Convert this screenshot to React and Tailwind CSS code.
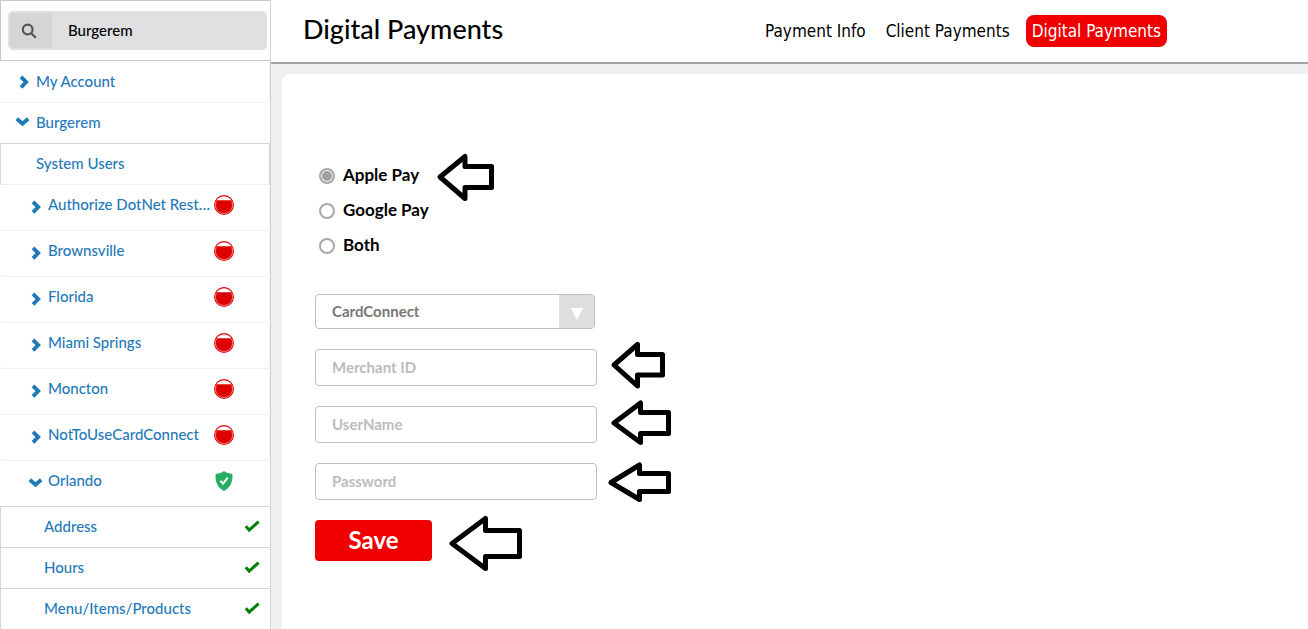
import React, { useState } from 'react';

//sidebar top links
const locations = [
  { name: 'Authorize DotNet Rest…', status: 'stop' },
  { name: 'Brownsville', status: 'stop' },
  { name: 'Florida', status: 'stop' },
  { name: 'Miami Springs', status: 'stop' },
  { name: 'Moncton', status: 'stop' },
  { name: 'NotToUseCardConnect', status: 'stop' },
  { name: 'Orlando', status: 'active', open: true },
];

const orlandoPages = ['Address', 'Hours', 'Menu/Items/Products'];

//credential fields with their pointer arrow
const fields = [
  { id: 'merchant', label: 'Merchant ID', type: 'text', arrow: '5,25 28.5,4.5 28.5,14.5 53.5,14.5 53.5,35 28.5,35 28.5,46' },
  { id: 'username', label: 'UserName', type: 'text', arrow: '5,26 31.5,6 31.5,15.5 59.5,15.5 59.5,36.5 31.5,36.5 31.5,45.5' },
  { id: 'password', label: 'Password', type: 'password', arrow: '2,28.5 30.5,11 30.5,19.5 59.5,19.5 59.5,37.5 30.5,37.5 30.5,45.5' },
];

const payOptions = ['Apple Pay', 'Google Pay', 'Both'];

function Chevron({ open }) {
  return (
    <svg className="w-4 h-4 shrink-0" viewBox="0 0 16 16" fill="none" stroke="#1f7ab8" strokeWidth="3.8">
      {open ? <path d="M1.8 4.8 7.5 9.7l5.700-4.900" /> : <path d="M5 2.900l5.200 5.200-5.200 5.200" />}
    </svg>
  );
}

function StopIcon() {
  return (
    <svg className="w-5 h-5 shrink-0" viewBox="0 0 20 20">
      <circle cx="10" cy="10" r="9.4" fill="#fff" stroke="#dd0000" strokeWidth="1.1" />
      <path d="M2.600 5.200h14.800a8.900 8.900 0 1 1-14.800 0z" fill="#dd0000" />
      <path d="M2.300 6.400a8.500 8.500 0 1 0 15.400 0" fill="none" stroke="#f5a0a0" strokeWidth="0.7" />
    </svg>
  );
}

function ShieldIcon() {
  return (
    <svg className="w-5 h-5 shrink-0" viewBox="0 0 20 20">
      <path d="M10 0c2.300 1.800 5 2.600 8.400 2.900 0.600 7-1.400 13.500-8.400 17C3 16.400 1 9.900 1.600 2.900 5 2.600 7.700 1.800 10 0z" fill="#27ae60" />
      <path d="M6.400 9.800l2.700 2.800 4.600-6" fill="none" stroke="#fff" strokeWidth="2" />
    </svg>
  );
}

function CheckIcon() {
  return (
    <svg className="w-4 h-4 shrink-0" viewBox="0 0 16 16" fill="none" stroke="#008000" strokeWidth="3">
      <path d="M1.800 8.300l3.400 3.800L14.600 3.600" />
    </svg>
  );
}

function Arrow({ points }) {
  return (
    <svg className="w-[76px] h-[55px] shrink-0 ml-3 overflow-visible" viewBox="0 0 76 55" aria-hidden="true">
      <polygon points={points} fill="#fff" stroke="#000" strokeWidth="5" strokeLinejoin="round" />
    </svg>
  );
}

function Sidebar() {
  const [search, setSearch] = useState('Burgerem');

  return (
    <aside className="w-[271px] shrink-0 border-r border-[#d2d2d2] bg-white font-['Lato',sans-serif] text-[15px] font-medium text-[#1f7ab8]">
      {/* Search */}
      <div className="h-[61px] border-t border-l border-b border-[#c8c8c8] pl-[7px] pr-[3px] pt-[10px]">
        <label className="flex h-[39px] rounded-[5px] bg-[#dfe0e2] p-[2px]">
          <span className="w-[42px] shrink-0 flex items-center justify-center rounded-l bg-[#d4d6d5] pr-1">
            <svg className="w-4 h-4" viewBox="0 0 16 16" fill="none" stroke="#555" strokeWidth="2.200">
              <circle cx="6.700" cy="6.500" r="4.900" />
              <path d="M10 10l4.800 4.800" />
            </svg>
          </span>
          <input
            aria-label="Search"
            className="w-full min-w-0 bg-transparent pl-4 text-black outline-none"
            value={search}
            onChange={(e) => setSearch(e.target.value)}
          />
        </label>
      </div>

      <nav>
        <a href="#account" className="flex items-center h-[42px] pl-4 gap-1 border-b border-r rounded-sm border-[#efefef]">
          <Chevron />
          My Account
        </a>
        <a href="#burgerem" className="flex items-center h-[41px] pl-[15px] pb-0.5 gap-[5px] border-b border-[#d6d6d6]">
          <Chevron open />
          Burgerem
        </a>
        <a href="#users" className="flex items-center h-[41px] pl-[35px] pb-0.5 border-l border-b border-r border-l-[#d6d6d6] border-r-[#d6d6d6] border-b-[#efefef]">
          System Users
        </a>

        {/* Locations */}
        {locations.map((item) => (
          <a
            key={item.name}
            href={'#' + item.name}
            className={
              'flex items-center h-[46px] pl-7 pr-[35px] pb-1.5 border-b ' +
              (item.open ? 'border-[#d6d6d6]' : 'border-r rounded-sm border-[#efefef]')
            }
          >
            <span className="pt-1"><Chevron open={item.open} /></span>
            <span className="w-[162px] ml-1 mr-1 whitespace-nowrap">{item.name}</span>
            {item.status === 'stop' ? <StopIcon /> : <ShieldIcon />}
          </a>
        ))}

        {/* Orlando pages */}
        {orlandoPages.map((page) => (
          <a key={page} href={'#' + page} className="flex items-center justify-between h-[41px] pl-[43px] pr-[10px] pb-0.5 border-l border-b border-[#d6d6d6]">
            {page}
            <CheckIcon />
          </a>
        ))}
      </nav>
    </aside>
  );
}

function App() {
  const [pay, setPay] = useState('Apple Pay');

  return (
    <div className="flex h-screen overflow-hidden bg-[#f0f0f0]">
      <Sidebar />

      <div className="flex-1 min-w-0 flex flex-col">
        {/* Header */}
        <header className="flex items-center h-16 shrink-0 pl-8 pr-[141px] bg-white border-b-2 border-[#a3a3a3]">
          <h1 className="flex-1 pb-1 font-['Lato',sans-serif] text-[27px] font-medium text-black">Digital Payments</h1>
          <nav className="flex items-center gap-4 leading-8 font-['DejaVu_Sans_Condensed','Noto_Sans',sans-serif] text-[17px] text-black whitespace-nowrap">
            <a href="#info">Payment Info</a>
            <a href="#client" className="pl-1">Client Payments</a>
            <a href="#digital" className="h-8 px-1.5 rounded-lg bg-[#f00000] text-white">Digital Payments</a>
          </nav>
        </header>

        {/* Payment form */}
        <main className="flex-1 mt-[10px] ml-[11px] pt-[84px] pl-[33px] bg-white rounded-tl-lg font-['Lato',sans-serif]">
          <form onSubmit={(e) => e.preventDefault()}>
            {payOptions.map((option) => (
              <div key={option} className="flex items-center h-[35px]">
                <label className="flex items-center pl-1 gap-2 text-[17px] font-bold text-black">
                  <input
                    type="radio"
                    name="pay"
                    checked={pay === option}
                    onChange={() => setPay(option)}
                    className="appearance-none w-4 h-4 rounded-full border-2 border-[#a8a8a8] bg-white checked:bg-[#a0a0a0] checked:shadow-[inset_0_0_0_1px_#fff]"
                  />
                  <span className="pb-0.5">{option}</span>
                </label>
                {option === 'Apple Pay' && <Arrow points="9,29 34,8.5 34,18.5 60.5,18.5 60.5,39.5 34,39.5 34,50.5" />}
              </div>
            ))}

            <div className="relative w-[280px] h-[35px] mt-[31px]">
              <select
                aria-label="Processor"
                className="appearance-none w-full h-full pl-4 rounded border border-[#bfbfbf] bg-white text-[15px] font-bold text-[#777] outline-none"
              >
                <option>CardConnect</option>
              </select>
              <span className="absolute right-px top-px bottom-px w-[35px] pt-1 flex items-center justify-center rounded-r-[3px] bg-[#dddee0] pointer-events-none">
                <svg className="w-3 h-3" viewBox="0 0 12 12">
                  <path d="M0 0h12L6 12z" fill="#fff" />
                </svg>
              </span>
            </div>

            <div className="flex flex-col gap-5 mt-5">
              {fields.map((field) => (
                <div key={field.id} className="flex items-center h-[37px]">
                  <input
                    id={field.id}
                    type={field.type}
                    aria-label={field.label}
                    placeholder={field.label}
                    className="w-[282px] h-full px-4 pb-0.5 rounded border border-[#bfbfbf] text-[15px] font-bold placeholder:text-[#bcbcbc] outline-none"
                  />
                  <Arrow points={field.arrow} />
                </div>
              ))}

              <div className="flex items-center h-[41px]">
                <button type="submit" className="w-[117px] h-full pb-0.5 rounded bg-[#f00000] text-2xl font-bold text-white">
                  Save
                </button>
                <Arrow points="8,30.5 41.5,5.5 41.5,17.5 75.5,17.5 75.5,43.5 41.5,43.5 41.5,55.5" />
              </div>
            </div>
          </form>
        </main>
      </div>
    </div>
  );
}

export default App;
